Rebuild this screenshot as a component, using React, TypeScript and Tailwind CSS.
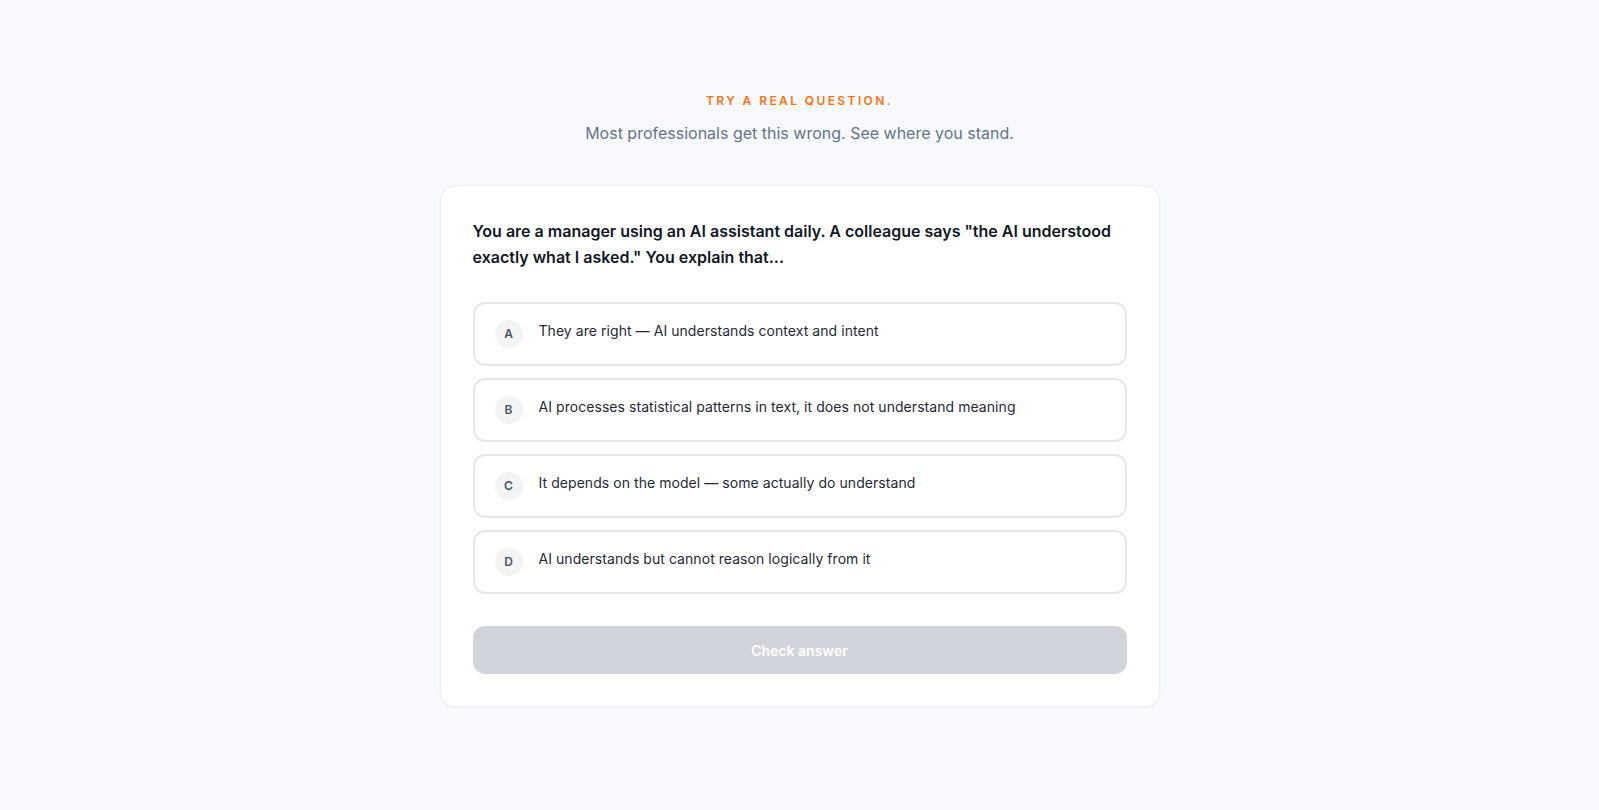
const options = [
  { key: "A", text: "They are right — AI understands context and intent" },
  { key: "B", text: "AI processes statistical patterns in text, it does not understand meaning" },
  { key: "C", text: "It depends on the model — some actually do understand" },
  { key: "D", text: "AI understands but cannot reason logically from it" },
];

export default function App() {
  return (
    <div className="min-h-screen bg-[#f8f9fc] font-['Inter',sans-serif] flex flex-col items-center pt-[91px]">
      <p className="text-[12px] font-semibold tracking-[0.2em] text-[#f97316] leading-[20px]">
        TRY A REAL QUESTION.
      </p>
      <p className="mt-[9px] text-[16px] text-[#64748b] leading-[26px]">
        Most professionals get this wrong. See where you stand.
      </p>

      <div className="mt-[39px] w-full max-w-[720px] bg-white rounded-2xl border border-[#eef0f5] shadow-[0_1px_3px_rgba(15,23,42,0.04)] p-8">
        <h2 className="text-[16px] font-semibold leading-[26px] text-[#111827]">
          You are a manager using an AI assistant daily. A colleague says "the AI understood
          exactly what I asked." You explain that...
        </h2>

        <div className="mt-8 flex flex-col gap-3">
          {options.map((o) => (
            <button
              key={o.key}
              className="flex items-center gap-4 rounded-xl border-2 border-[#e5e7eb] bg-white px-5 py-4 text-left"
            >
              <span className="flex h-7 w-7 shrink-0 items-center justify-center rounded-full bg-[#f3f4f6] text-[12px] font-semibold text-[#4b5563]">
                {o.key}
              </span>
              <span className="pb-[6px] text-[14px] tracking-[0.004em] leading-[22px] text-[#1f2937]">{o.text}</span>
            </button>
          ))}
        </div>

        <button className="mt-8 h-12 w-full rounded-xl bg-[#d1d5db] text-[14px] font-semibold text-white">
          Check answer
        </button>
      </div>
    </div>
  );
}
